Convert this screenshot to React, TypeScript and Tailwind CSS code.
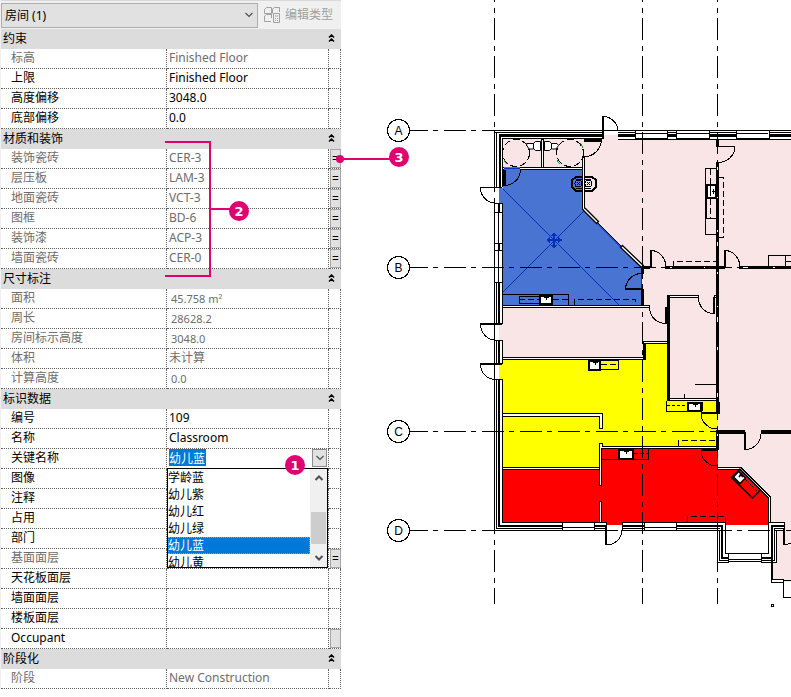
import React, { useState } from 'react';

type Row = {
  label: string;
  value?: string;
  muted?: boolean;
  small?: boolean;
  assoc?: string;
  picker?: boolean;
};

type Group = { title: string; rows: Row[] };

const GROUPS: Group[] = [
  {
    title: '约束',
    rows: [
      { label: '标高', value: 'Finished Floor', muted: true },
      { label: '上限', value: 'Finished Floor' },
      { label: '高度偏移', value: '3048.0' },
      { label: '底部偏移', value: '0.0' },
    ],
  },
  {
    title: '材质和装饰',
    rows: [
      { label: '装饰瓷砖', value: 'CER-3', muted: true, assoc: '=' },
      { label: '层压板', value: 'LAM-3', muted: true, assoc: '=' },
      { label: '地面瓷砖', value: 'VCT-3', muted: true, assoc: '=' },
      { label: '图框', value: 'BD-6', muted: true, assoc: '=' },
      { label: '装饰漆', value: 'ACP-3', muted: true, assoc: '=' },
      { label: '墙面瓷砖', value: 'CER-0', muted: true, assoc: '=' },
    ],
  },
  {
    title: '尺寸标注',
    rows: [
      { label: '面积', value: '45.758 m²', muted: true, small: true },
      { label: '周长', value: '28628.2', muted: true, small: true },
      { label: '房间标示高度', value: '3048.0', muted: true, small: true },
      { label: '体积', value: '未计算', muted: true },
      { label: '计算高度', value: '0.0', muted: true, small: true },
    ],
  },
  {
    title: '标识数据',
    rows: [
      { label: '编号', value: '109' },
      { label: '名称', value: 'Classroom' },
      { label: '关键名称', picker: true },
      { label: '图像' },
      { label: '注释' },
      { label: '占用' },
      { label: '部门' },
      { label: '基面面层', muted: true, assoc: '=' },
      { label: '天花板面层' },
      { label: '墙面面层' },
      { label: '楼板面层' },
      { label: 'Occupant', assoc: '' },
    ],
  },
  {
    title: '阶段化',
    rows: [{ label: '阶段', value: 'New Construction', muted: true }],
  },
];

const KEY_NAMES = ['学龄蓝', '幼儿紫', '幼儿红', '幼儿绿', '幼儿蓝', '幼儿黄'];

const Chevron: React.FC<{ up?: boolean; bold?: boolean }> = ({ up, bold }) => (
  <svg width="10" height="6" viewBox="0 0 10 6" fill="none" stroke="#505050" strokeWidth={bold ? 2 : 1.2}>
    <path d={up ? 'M1.5 5L5 1.5L8.5 5' : 'M1.5 1L5 4.5L8.5 1'} />
  </svg>
);

const KeyNamePicker: React.FC = () => {
  const [open, setOpen] = useState(true);
  const [value, setValue] = useState('幼儿蓝');

  return (
    <div className="relative flex h-[19px] justify-between">
      <input
        id="关键名称"
        role="combobox"
        aria-expanded={open}
        aria-controls="key-names"
        value={value}
        onChange={(e) => setValue(e.target.value)}
        className="ml-[2px] h-[17px] w-[37px] bg-[#0078d7] text-white outline-none"
      />
      <button
        aria-label="展开关键名称"
        onClick={() => setOpen(!open)}
        className="mr-px flex h-[18px] w-[15px] items-center justify-center border border-[#8c8c8c] bg-[#e1e1e1]"
      >
        <Chevron />
      </button>
      {open && (
        <div className="absolute top-[19px] left-0 z-10 flex h-[100px] w-[161px] border border-black bg-white">
          <ul id="key-names" role="listbox" aria-label="关键名称" className="flex-1 overflow-hidden">
            {KEY_NAMES.map((name) => (
              <li
                key={name}
                role="option"
                aria-selected={name === value}
                onClick={() => setValue(name)}
                className={`h-[17px] leading-[17px] ${name === value ? 'bg-[#0078d7] text-white outline-1 -outline-offset-1 outline-dotted outline-[#ff8728]' : ''}`}
              >
                {name}
              </li>
            ))}
          </ul>
          <div className="flex w-[17px] flex-col items-center bg-[#f0f0f0] py-[6px]">
            <Chevron up bold />
            <div className="mt-[31px] mb-auto h-8 w-[15px] bg-[#cdcdcd]" />
            <Chevron bold />
          </div>
        </div>
      )}
    </div>
  );
};

const PropertyRow: React.FC<{ row: Row }> = ({ row }) => {
  const tone = row.muted ? 'text-[#6d6d6d]' : 'text-black';
  const editable = !row.muted && !row.picker;

  return (
    <tr className={`h-5 ${tone}`}>
      <th scope="row" className="border-r border-b border-dotted border-[#606060] p-0 pl-[10px] text-left font-normal">
        <label htmlFor={row.muted ? undefined : row.label} className="block h-[19px] leading-[17px]">
          {row.label}
        </label>
      </th>
      <td className="border-r border-b border-dotted border-[#606060] p-0">
        {row.picker && <KeyNamePicker />}
        {editable && (
          <input
            id={row.label}
            defaultValue={row.value}
            className="block h-[19px] w-full bg-transparent pb-[2px] pl-[2px] outline-none"
          />
        )}
        {row.muted && (
          <span className={`block h-[19px] ${row.small ? 'pl-1 text-[11px] leading-[19px]' : 'pl-[2px] leading-[17px]'}`}>
            {row.value}
          </span>
        )}
      </td>
      <td className="border-r border-b border-dotted border-[#606060] p-0">
        {row.assoc !== undefined && (
          <button
            aria-label={`关联${row.label}`}
            className="ml-px flex h-[19px] w-[11px] items-center justify-center border border-[#a6a6a6] bg-[#e1e1e1] text-xs leading-none text-black"
          >
            {row.assoc}
          </button>
        )}
      </td>
    </tr>
  );
};

const PropertyGroup: React.FC<{ group: Group }> = ({ group }) => {
  const [open, setOpen] = useState(true);

  return (
    <tbody>
      <tr className="h-5 bg-[#dcdcdc]">
        <th colSpan={3} className="p-0 text-left font-normal">
          <div className="flex h-5 items-center justify-between pr-[6px] pl-[2px]">
            <span className="leading-5">{group.title}</span>
            <button aria-label={`折叠${group.title}`} aria-expanded={open} onClick={() => setOpen(!open)} className="pb-[3px]">
              <svg width="7" height="8" viewBox="0 0 7 8" fill="none" stroke="#000" strokeWidth="1.5" className="block">
                <path d="M1 3.5L3.5 1L6 3.5M1 7.5L3.5 5L6 7.5" />
              </svg>
            </button>
          </div>
        </th>
      </tr>
      {open && group.rows.map((row) => <PropertyRow key={row.label} row={row} />)}
    </tbody>
  );
};

const PropertiesPanel: React.FC = () => (
  <section aria-label="属性" className="w-[341px] shrink-0 border-l border-[#f0f0f0] text-xs">
    <div className="flex h-[29px] items-start border-t border-[#d9d9d9] bg-[#f0f0f0] pt-[2px]">
      <div className="relative">
        <select
          aria-label="类型"
          className="h-[25px] w-[257px] appearance-none border border-[#adadad] bg-[#e1e1e1] pt-px pl-[3px] text-black outline-none"
        >
          <option>房间 (1)</option>
        </select>
        <span className="pointer-events-none absolute top-[9px] right-1">
          <Chevron />
        </span>
      </div>
      <button disabled className="ml-[6px] flex h-[23px] items-center gap-1 text-[#a0a0a0]">
        <svg width="17" height="17" viewBox="0 0 17 17" fill="none" stroke="#a0a0a0">
          <path d="M.5 3.5L2.5 1.5H7.5V7.5H.5ZM8.5 7.5V3L10.5 1.5H15.5V6M.5 15.5V10L2.5 8.5H7.5M.5 15.5H7M7.5 8V12" />
          <path d="M9.5 7.5H15.5V16.5H9.5Z" fill="#f0f0f0" />
          <path d="M11 10H14M11 12.5H12M13 12.5H14M11 14.5H12M13 14.5H14" />
        </svg>
        <span>编辑类型</span>
      </button>
    </div>
    <table className="w-full table-fixed border-separate border-spacing-0">
      <colgroup>
        <col className="w-[166px]" />
        <col className="w-[162px]" />
        <col className="w-[12px]" />
      </colgroup>
      {GROUPS.map((group) => (
        <PropertyGroup key={group.title} group={group} />
      ))}
    </table>
  </section>
);

const GRID_ROWS = [
  { name: 'A', y: 130.5 },
  { name: 'B', y: 267.5 },
  { name: 'C', y: 431.5 },
  { name: 'D', y: 530.5 },
];

const GRID_COLUMNS = [494.5, 642.5, 717.5];

const RoomFills = () => (
  <g stroke="none">
    <path
      fill="#f9e5e5"
      d="M502 139H603V135H618V139H791V582H784V580H773V562H777V530H784V522H770V497L741 467H717V447H667V359H502V341H499V324H502Z"
    />
    <path fill="#4a74d1" d="M503 170H583V209L642 267V305H503V203H499V188H503Z" />
    <path fill="#ff0" d="M499 363H502V359H645V343H667V401H718V447H601V468H502V379H499Z" />
    <path fill="#f00" d="M502 470H601V449H718V469H741L768 497V525H725V522H622V525H606V522H502Z" />
  </g>
);

const OuterWalls = () => (
  <g>
    {/* north */}
    <path d="M495 130.5H791M495 132.5H603M618 132.5H791M502 138.5H603M618 139.5H791" />
    <path strokeWidth="3" d="M499 135.5H603M618 135.5H635.5M667 135.5H677M709 135.5H737M769 135.5H791" />
    <path fill="#fff" d="M635.5 130.5H667.5V138.5H635.5ZM676.5 130.5H709.5V138.5H676.5ZM736.5 130.5H769.5V138.5H736.5Z" />
    <path d="M635 133.5H668M676 133.5H710M736 133.5H768" />
    {/* west */}
    <path d="M494.5 130V188M494.5 203V324M494.5 340V363M494.5 379V531M496.5 132V188M496.5 282V324M496.5 340V363M496.5 379V529" />
    <path strokeWidth="2" d="M500 135V187M499 203V212M499 244V250M499 282V324M499 340V364M499 379V527" />
    <path d="M502.5 138V187M502.5 203V324M502.5 340V364M502.5 379V523M498.5 212V282" />
    <path d="M494 203.5H503M494 212.5H503M494 243.5H503M494 250.5H503M494 282.5H503M494 340.5H503M494 379.5H503" />
    {/* south */}
    <path d="M494 530.5H606M622 530.5H720M496 528.5H562M594 528.5H606M622 528.5H644M676 528.5H720M502 522.5H607M622 522.5H725.5V553.5H768.5V498" />
    <path strokeWidth="2" d="M499 526H563M594 526H606M622 526H645M676 526H722V558H729M761 558H772" />
    <path fill="#fff" d="M562.5 522.5H594.5V530.5H562.5ZM644.5 522.5H676.5V530.5H644.5Z" />
    <path d="M562 527.5H595M644 527.5H677M606.5 522V530M622.5 522V530" />
    {/* entry bay */}
    <path d="M717.5 530V562.5H728.5M719.5 530V560.5H729M728.5 553V562M728 559.5H761M728 561.5H761M761.5 553V562M761 562.5H776.5V530M761 560.5H774.5V528.5H784M776.5 530.5H784" />
    <path d="M768 522.5H784" />
    <path strokeWidth="2" d="M784 526H772V582" />
    <path fill="#fff" d="M771.5 579.5H783.5V582.5H771.5Z" />
    <path d="M783.5 580H791M783.5 582V597H791M784 542V522M784 544.5Q787 544.5 791 543" />
    <path strokeWidth="2" d="M784 528V545" />
    <path d="M771.5 604.5H773.5V606.5H771.5Z" />
  </g>
);

const InnerWalls = () => (
  <g>
    {/* thin partitions: two faces with white between */}
    <g fill="#fff">
      <path d="M502.5 167.5H583V169.5H502.5ZM541.5 139V167.5H543.5V139Z" />
      <path d="M582.5 157.5H584.5V209H582.5Z" />
      <path d="M502.5 305.5H649.5V307.5H502.5Z" />
      <path d="M502.5 359.5V357.5H643.5V341.5H667V343.5H645.5V359.5Z" />
      <path d="M502.5 413.5H602.5V428.5H599.5V416.5H502.5Z" />
      <path d="M599.5 443.5H602.5V446.5H717V448.5H601.5V485.5H599.5Z" />
      <path d="M502.5 467.5H599.5V469.5H502.5ZM599.5 501.5H601.5V522.5H599.5Z" />
      <path d="M717.5 467.5H741L770.5 497V522.5H768.5V498L740 469.5H717.5Z" />
      <path d="M667.5 295.5H698.5V297.5H667.5ZM714.5 295.5H717V297.5H714.5ZM667.5 398.5H717V400.5H667.5Z" />
    </g>
    {/* classroom diagonal, glazed in the middle */}
    <g shapeRendering="auto">
      <path stroke="#0033b8" d="M597 223.5L621 247.5" />
      <path d="M598 223L622 247" />
      <path strokeWidth="4" d="M584 209L598 223M621 246L643 267" />
      <path stroke="#fff" strokeWidth="1.4" d="M584 209L597 222M622 247L642 266" />
    </g>
    {/* solid partitions */}
    <path strokeWidth="3" d="M668 296V400M644.5 343V359M642.5 267V274M642.5 289V306" />
    <path strokeWidth="3" d="M717.5 139V147M717.5 162V402M643 267.5H650M665 267.5H725M739 267.5H791M717.5 430V450" />
    <path stroke="#fff" strokeDasharray="5 10" d="M717.5 167V400M670 267.5H720M743 267.5H791M717.5 432V447" />
    <path strokeWidth="4" d="M717 432H745M761 432H791M717.5 402V414" />
    <path strokeWidth="3" d="M584 140.5H602" />
    <path stroke="#4a74d1" strokeWidth="3" d="M504 168.5H520" />
    <path stroke="#0033b8" d="M504 168.5H520" />
  </g>
);

const Doors = () => (
  <g fill="none">
    <g strokeWidth="2">
      <path d="M480 324H502M480 364H502M603 116V139M651 250V268M725 250V268" />
      <path d="M625 289H642M666 307V324M714 297V314M701 413H718M701 450H718M745 432V450M606 527V545" />
    </g>
    <path strokeWidth="3" d="M504.5 170V186" />
    <path d="M480 187.5H502M717 146.5H735" />
    <path d="M480.5 188A15 15 0 0 0 495 203M480.5 324A15 16 0 0 0 495 340M480.5 364A15 15 0 0 0 495 379.5" />
    <path d="M603 116.5A15 15 0 0 1 618 131M601.5 139A18 18 0 0 1 583.5 157M520.5 169A16 16 0 0 1 505 185.5" />
    <path d="M735 147A17 16 0 0 1 718 162.5M651 250.5A15 17 0 0 1 666 267M725 250.5A15 17 0 0 1 740 267" />
    <path d="M625.5 289A16 16 0 0 1 641 273.5M649.5 307A16 16 0 0 0 665.5 323.5M698.5 297A15 16 0 0 0 713.5 313.5" />
    <path d="M701 413A16 16 0 0 0 717.5 429M701 450A16 16 0 0 0 717.5 466M745 449.5A16 16 0 0 0 761 434M622 530A16 15 0 0 1 607 545" />
  </g>
);

const Sink = ({ x, y, w, h }: { x: number; y: number; w: number; h: number }) => (
  <g>
    <rect x={x} y={y} width={w} height={h} fill="#fff" strokeWidth="2" />
    <path d={`M${x + w / 2 - 2} ${y + 1.5}h5M${x + w / 2 + 0.5} ${y + 1}v3`} />
  </g>
);

const Fixtures = () => (
  <g fill="none">
    {/* restrooms */}
    <circle cx="516" cy="153" r="13.5" strokeDasharray="7 3" />
    <circle cx="570" cy="153" r="13.5" strokeDasharray="7 3" />
    <path stroke="#1a9a1a" d="M504 160Q505 163 507 164M526 143Q528 145 529 148M557 160Q558 163 560 164M580 143Q582 145 583 148" />
    <g shapeRendering="auto">
      <path fill="#fff" d="M535.5 141.5H540.5V150.5H535.5L533.5 148.5V143.5ZM533.5 143.5H527L526.5 145L529 149H533.5Z" />
      <path fill="#fff" d="M549.5 141.5H544.5V150.5H549.5L551.5 148.5V143.5ZM551.5 143.5H557L558.5 145.5L556 149H551.5Z" />
    </g>
    <path strokeWidth="2" d="M582 177H576L572 180V187L576 191H582M585 177H592L596 180V187L592 191H585" />
    <circle cx="578.5" cy="183.5" r="3.5" />
    <circle cx="588.5" cy="183.5" r="3.5" />
    <path d="M577 182L580 185M580 182L577 185M587 182L590 185M590 182L587 185M576 179.5H582M576 188.5H582M585 179.5H591M585 188.5H591" />
    {/* blue classroom */}
    <path d="M502.5 294.5H568.5V305M519.5 296.5H539.5V303.5H519.5Z" />
    <Sink x={540} y={296} w={12} h={8} />
    <path strokeDasharray="6 3" d="M519 299.5H539M553 299.5H568M574.5 305V299.5H635.5V305" />
    {/* north rooms */}
    <path d="M705.5 168.5H716M705.5 168V234.5H716M705.5 218.5H716" />
    <rect x="707" y="185" width="9" height="13" fill="#fff" strokeWidth="2" />
    <path d="M712 191.5H716M713.5 189V194M710.5 186V196" />
    <path strokeWidth="2" d="M706 198V218" />
    <path strokeDasharray="6 3" d="M710.5 169V184M710.5 199V218M719 177.5H723.5V237.5H719M673.5 267V261.5H717" />
    <path d="M791 255.5H768.5V266M785.5 256V266M786 261.5H791" />
    {/* service room */}
    <path d="M695 384.5H717M684.5 394V399" />
    <path d="M666.5 401V411.5H702M702.5 402V411" />
    <path strokeDasharray="3 2" d="M667 405.5H688" />
    <Sink x={688} y={403} w={13} h={8} />
    {/* yellow rooms */}
    <path d="M600 360V369.5H618.5V360.5H600" />
    <Sink x={589} y={361} w={11} h={9} />
    <path strokeDasharray="6 3" d="M601 364.5H618M678.5 446V440.5H717" />
    {/* red rooms */}
    <path d="M601 459.5H648.5V449" />
    <Sink x={619} y={450} w={14} h={9} />
    <path strokeDasharray="4 2" d="M634 453.5H648" />
    <path strokeDasharray="6 3" d="M687.5 522V516.5H725.5V522" />
    <g shapeRendering="auto">
      <path d="M740 469L731.5 477.5L752.5 498L760.5 490Z" strokeWidth="1.5" />
      <path fill="#fff" strokeWidth="1.5" d="M738.5 471.5L733.5 477L740 483.5L745.5 478Z" />
      <path strokeWidth="1.5" d="M740 474L743 477M742 473L739 477" />
      <path strokeDasharray="5 2" d="M745 479L757 491" />
    </g>
  </g>
);

const FloorPlan: React.FC = () => (
  <svg
    role="img"
    aria-label="楼层平面"
    viewBox="341 0 450 697"
    className="h-[697px] w-[450px] shrink-0"
    stroke="#000"
    fill="none"
    shapeRendering="crispEdges"
  >
    <RoomFills />
    <g stroke="#0033b8">
      <path d="M503 189L619 305M503 292L584 211M641 273V289" />
      <path strokeWidth="2" d="M554 233V248M547 240H562" />
      <path d="M551.5 235.5H556.5M551.5 245.5H556.5M549.5 237.5V243M558.5 237.5V243" />
      <path d="M551 236L554 233L557 236M551 245L554 248L557 245M550 237L547 240L550 243M558 237L561 240L558 243" />
    </g>
    <OuterWalls />
    <InnerWalls />
    <Doors />
    <Fixtures />
    {GRID_COLUMNS.map((x) => (
      <path key={x} strokeDasharray="22 6 5 5" strokeDashoffset="20" d={`M${x} 0V604`} />
    ))}
    {GRID_ROWS.map(({ name, y }) => (
      <g key={name}>
        <path strokeDasharray="22 5 5 6" strokeDashoffset="4" d={`M410 ${y}H${name === 'C' ? 717 : 791}`} />
        <circle cx="398.5" cy={y} r="11" fill="#fff" />
        <text
          x="398.5"
          y={y + 4}
          textAnchor="middle"
          stroke="none"
          fill="#000"
          className="font-['Liberation_Sans',sans-serif] text-xs"
        >
          {name}
        </text>
      </g>
    ))}
  </svg>
);

const CALLOUTS = [
  { n: 1, x: 295, y: 465 },
  { n: 2, x: 239, y: 211 },
  { n: 3, x: 399, y: 157 },
];

const Callouts: React.FC = () => (
  <svg
    viewBox="0 0 420 500"
    className="pointer-events-none absolute top-0 left-0 z-20 h-[500px] w-[420px]"
    fill="none"
    stroke="#e0006f"
    strokeWidth="2"
  >
    <path d="M165 142H210V276H165M210 209H232M340 159H392" />
    <circle cx="340" cy="159" r="3" fill="#e0006f" />
    {CALLOUTS.map(({ n, x, y }) => (
      <g key={n} stroke="none">
        <circle cx={x} cy={y} r="10" fill="#e0006f" />
        <text
          x={x}
          y={y + 5}
          textAnchor="middle"
          fill="#fff"
          className="font-['DejaVu_Sans',sans-serif] text-[13px] font-bold"
        >
          {n}
        </text>
      </g>
    ))}
  </svg>
);

const App: React.FC = () => (
  <main className="relative flex min-h-screen items-start overflow-hidden bg-white font-['Noto_Sans','Noto_Sans_CJK_SC',sans-serif] text-black">
    <PropertiesPanel />
    <FloorPlan />
    <Callouts />
  </main>
);

export default App;
